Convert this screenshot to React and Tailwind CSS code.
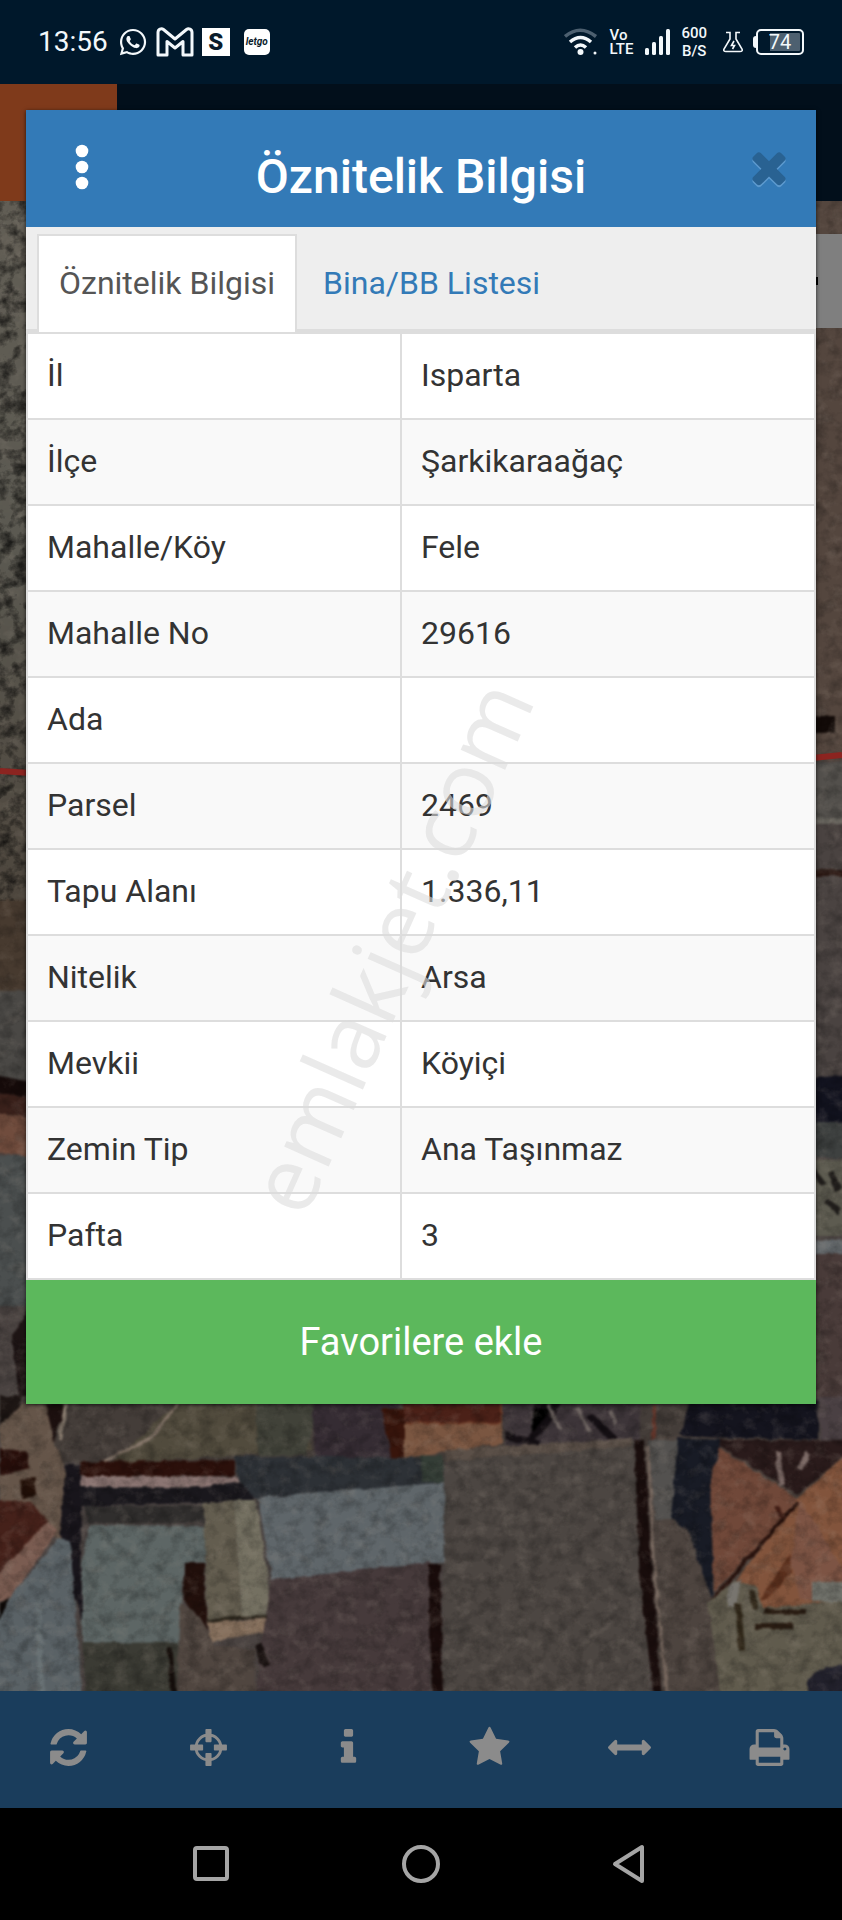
import React from "react";
import { FaWhatsapp } from "react-icons/fa";

const rows = [
  { label: "İl", value: "Isparta" },
  { label: "İlçe", value: "Şarkikaraağaç" },
  { label: "Mahalle/Köy", value: "Fele" },
  { label: "Mahalle No", value: "29616" },
  { label: "Ada", value: "" },
  { label: "Parsel", value: "2469" },
  { label: "Tapu Alanı", value: "1.336,11" },
  { label: "Nitelik", value: "Arsa" },
  { label: "Mevkii", value: "Köyiçi" },
  { label: "Zemin Tip", value: "Ana Taşınmaz" },
  { label: "Pafta", value: "3" },
];

const tools = [
  {
    name: "Yenile",
    path: "M1511 928q0 5-1 7-64 268-268 434.5t-478 166.5q-146 0-282.5-55t-243.5-157l-129 129q-19 19-45 19t-45-19-19-45v-448q0-26 19-45t45-19h448q26 0 45 19t19 45-19 45l-137 137q71 66 161 102t187 36q134 0 250-65t186-179q11-17 53-117 8-23 30-23h192q13 0 22.5 9.5t9.5 22.5zm25-800v448q0 26-19 45t-45 19h-448q-26 0-45-19t-19-45 19-45l138-138q-148-137-349-137-134 0-250 65t-186 179q-11 17-53 117-8 23-30 23h-199q-13 0-22.5-9.5t-9.5-22.5v-7q65-268 270-434.5t480-166.5q146 0 284 55.5t245 156.5l130-129q19-19 45-19t45 19 19 45z",
    viewBox: "-128 -128 1792 1792",
  },
  {
    name: "Konum",
    path: "M896 316a580 580 0 1 0 0 1160a580 580 0 1 0 0-1160zm0 120a460 460 0 1 1 0 920a460 460 0 1 1 0-920zM768 160v480q0 32 32 32h192q32 0 32-32V160q0-32-32-32H800q-32 0-32 32zM768 1152v480q0 32 32 32h192q32 0 32-32v-480q0-32-32-32H800q-32 0-32 32zM128 800v192q0 32 32 32h480q32 0 32-32V800q0-32-32-32H160q-32 0-32 32zM1120 800v192q0 32 32 32h480q32 0 32-32V800q0-32-32-32h-480q-32 0-32 32z",
    viewBox: "0 0 1792 1792",
  },
  {
    name: "Bilgi",
    path: "M1216 1344v128q0 26-19 45t-45 19h-512q-26 0-45-19t-19-45v-128q0-26 19-45t45-19h64v-384h-64q-26 0-45-19t-19-45v-128q0-26 19-45t45-19h384q26 0 45 19t19 45v576h64q26 0 45 19t19 45zm-128-1152v192q0 26-19 45t-45 19h-256q-26 0-45-19t-19-45v-192q0-26 19-45t45-19h256q26 0 45 19t19 45z",
    viewBox: "0 0 1792 1792",
  },
  {
    name: "Favoriler",
    path: "M1728 647q0 22-26 48l-363 354 86 500q1 7 1 20 0 21-10.5 35.5t-30.5 14.5q-19 0-40-12l-449-236-449 236q-22 12-40 12-21 0-31.5-14.5t-10.5-35.5q0-6 2-20l86-500-364-354q-25-27-25-48 0-37 56-46l502-73 225-455q19-41 49-41t49 41l225 455 502 73q56 9 56 46z",
    viewBox: "0 0 1792 1792",
  },
  {
    name: "Ölçüm",
    path: "M1792 896q0 26-19 45l-256 256q-19 19-45 19t-45-19-19-45v-128h-1024v128q0 26-19 45t-45 19-45-19l-256-256q-19-19-19-45t19-45l256-256q19-19 45-19t45 19 19 45v128h1024v-128q0-26 19-45t45-19 45 19l256 256q19 19 19 45z",
    viewBox: "0 0 1792 1792",
  },
  {
    name: "Yazdır",
    path: "M448 1536h896v-256h-896v256zm0-640h896v-384h-160q-40 0-68-28t-28-68v-160h-640v640zm1152 64q0-26-19-45t-45-19-45 19-19 45 19 45 45 19 45-19 19-45zm128 0v416q0 13-9.5 22.5t-22.5 9.5h-224v160q0 40-28 68t-68 28h-960q-40 0-68-28t-28-68v-160h-224q-13 0-22.5-9.5t-9.5-22.5v-416q0-79 56.5-135.5t135.5-56.5h64v-544q0-40 28-68t68-28h672q40 0 88 20t76 48l152 152q28 28 48 76t20 88v256h64q79 0 135.5 56.5t56.5 135.5z",
    viewBox: "0 0 1792 1792",
  },
];

function StatusBar() {
  return (
    <div className="flex h-[84px] items-center justify-between bg-[#00182b] pr-[38px] pl-[38px] text-[#f3f8fb]">
      <div className="flex items-center">
        <span className="text-[28px] leading-8">13:56</span>
        <FaWhatsapp className="ml-[10px] size-[30px]" />
        <svg className="ml-2 h-[30px] w-[38px]" viewBox="0 0 38 30" fill="none">
          <path
            d="M2 5.5C2 2 5.500 1 7.500 2.500L19 12 30.500 2.500C32.500 1 36 2 36 5.500V28H27V14.500L19 21 11 14.500V28H2z"
            stroke="currentColor"
            strokeWidth="3"
            strokeLinejoin="round"
          />
        </svg>
        <span className="ml-2 flex size-[28px] items-center justify-center bg-white text-[24px] leading-7 font-black text-[#0b1c2b]">
          S
        </span>
        <span className="ml-[14px] flex size-[26px] items-center justify-center rounded-[5px] bg-white text-[10px] leading-3 font-bold text-[#0b1c2b] italic">
          letgo
        </span>
      </div>
      <div className="flex items-center">
        <svg className="h-[28px] w-[34px]" viewBox="0 0 34 28" fill="none" strokeWidth="3.500">
          <path d="M1 8.500Q16 -4 32 8.500" stroke="#4d6070" />
          <path d="M6 14Q16.500 5 27 14" stroke="currentColor" />
          <path d="M11 19.500Q16.500 14.500 22 19.500" stroke="currentColor" />
          <circle cx="16.500" cy="24" r="3" fill="currentColor" />
          <circle cx="31" cy="25" r="1.500" fill="currentColor" />
        </svg>
        <span className="ml-3 flex flex-col text-[15px] leading-[14px] font-medium">
          <span>Vo</span>
          <span>LTE</span>
        </span>
        <svg className="ml-3 h-[26px] w-[26px]" viewBox="0 0 26 26" fill="currentColor">
          <rect x="0" y="19" width="4" height="7" rx="1.500" />
          <rect x="7" y="13" width="4" height="13" rx="1.500" />
          <rect x="14" y="7" width="4" height="19" rx="1.500" />
          <rect x="21" y="0" width="4" height="26" rx="1.500" />
        </svg>
        <span className="ml-[10px] flex flex-col items-center text-[15px] leading-[18px] font-medium">
          <span>600</span>
          <span>B/S</span>
        </span>
        <svg className="ml-4 h-[22px] w-[20px]" viewBox="0 0 20 22" fill="none" stroke="currentColor" strokeWidth="1.600">
          <path d="M3 1.500H7V8L1 18Q0 20.500 3 20.500H17Q20 20.500 19 18L13 8V1.500H17" />
          <path d="M11 10L8.500 14.500H11.500L9.500 18" />
        </svg>
        <span className="ml-[10px] flex items-center">
          <span className="h-3 w-[3px] rounded-l-sm bg-[#f3f8fb]" />
          <span className="flex h-[26px] w-12 items-center justify-center rounded-[5px] border-2 border-[#f3f8fb] bg-[linear-gradient(90deg,transparent_12px,#4d6070_12px)] bg-clip-content p-[2px] text-[20px] leading-5">
            74
          </span>
        </span>
      </div>
    </div>
  );
}

// Satellite layer, already darkened by the modal backdrop
function SatelliteMap() {
  return (
    <svg
      className="absolute inset-0 h-full w-full"
      viewBox="0 201 842 1490"
      preserveAspectRatio="xMidYMid slice"
      aria-hidden="true"
    >
      <defs>
        <filter id="soft" x="-2%" y="-2%" width="104%" height="104%" colorInterpolationFilters="sRGB">
          <feTurbulence type="fractalNoise" baseFrequency=".08" numOctaves="3" seed="4" result="n" />
          <feDisplacementMap in="SourceGraphic" in2="n" scale="5" xChannelSelector="R" yChannelSelector="G" />
          <feGaussianBlur stdDeviation="1.300" />
        </filter>
        <filter id="grain" x="0" y="0" width="100%" height="100%" colorInterpolationFilters="sRGB">
          <feTurbulence type="fractalNoise" baseFrequency=".07 .08" numOctaves="4" seed="9" />
          <feColorMatrix values="0 0 0 0 0  0 0 0 0 0  0 0 0 0 0  2.400 0 0 0 -1" />
        </filter>
        <filter id="light" x="0" y="0" width="100%" height="100%" colorInterpolationFilters="sRGB">
          <feTurbulence type="fractalNoise" baseFrequency=".07 .08" numOctaves="4" seed="21" />
          <feColorMatrix values="0 0 0 0 .7  0 0 0 0 .65  0 0 0 0 .6  0 2.400 0 0 -1.200" />
        </filter>
        <linearGradient id="rocks" x1="0" y1="0" x2="0" y2="1">
          <stop offset="0" stopColor="#625e55" />
          <stop offset=".5" stopColor="#5b5951" />
          <stop offset="1" stopColor="#4d463d" />
        </linearGradient>
      </defs>
      <rect x="0" y="201" width="842" height="1490" fill="#4a4341" />
      <g filter="url(#soft)">
        {/* left edge */}
        <rect x="-10" y="190" width="60" height="710" fill="url(#rocks)" />
        <rect x="-10" y="900" width="60" height="90" fill="#473a2f" />
        <rect x="-10" y="990" width="60" height="90" fill="#4a4845" />
        <path d="M-10 1074L40 1084V1100L-10 1092z" fill="#160b0a" />
        <path d="M-10 1092L40 1100V1120L-10 1112z" fill="#3a211b" />
        <path d="M-10 1112L40 1120V1158L-10 1152z" fill="#704c3d" />
        <rect x="-10" y="1156" width="60" height="150" fill="#4b4f4f" />
        <path d="M40 1290L12 1335 20 1410H40z" fill="#1d1414" />

        {/* right edge */}
        <rect x="800" y="190" width="60" height="571" fill="#54463e" />
        <rect x="800" y="716" width="35" height="17" fill="#120a08" />
        <rect x="800" y="762" width="60" height="60" fill="#53504c" />
        <rect x="800" y="818" width="60" height="6" fill="#69665f" />
        <rect x="800" y="870" width="60" height="6" fill="#2c1914" />
        <path d="M800 1080L850 1074V1122H800z" fill="#12131f" />
        <rect x="800" y="1122" width="60" height="36" fill="#3e4140" />
        <rect x="800" y="1160" width="60" height="76" fill="#5d5b50" />
        <path d="M812 1170L824 1185M830 1172L838 1190M826 1202L840 1212" stroke="#201d1b" strokeWidth="6" />
        <rect x="800" y="1240" width="60" height="14" fill="#64696c" />
        <rect x="800" y="1254" width="60" height="160" fill="#493b39" />

        {/* gardens under the dialog */}
        <rect x="0" y="1396" width="842" height="66" fill="#443d39" />
        <path d="M0 1396H22L8 1440 0 1436z" fill="#1d1614" />
        <path d="M22 1404H48L54 1440 66 1470 62 1540 40 1530 0 1500V1425z" fill="#655549" />
        <path d="M46 1404H66L54 1442z" fill="#1c100f" />
        <path d="M158 1420L176 1404H300L312 1450 110 1464 130 1446z" fill="#514b3d" />
        <path d="M178 1404L150 1438 104 1462" fill="none" stroke="#827367" strokeWidth="3" />
        <path d="M66 1404L60 1440" stroke="#8a7d70" strokeWidth="4" />
        <path d="M256 1400H320L306 1455H258z" fill="#414239" />
        <path d="M312 1400H400V1462H315z" fill="#352c33" />
        <path d="M382 1408H404V1462H392z" fill="#38150c" />
        <path d="M404 1400H502V1442H404z" fill="#6b3b28" />
        <path d="M404 1400H500V1422H404z" fill="#4b2118" />
        <path d="M404 1424H502V1444L404 1458z" fill="#7a5641" />
        <path d="M0 1448L26 1452 30 1468 0 1475z" fill="#290f0b" />
        <path d="M20 1480L36 1478 34 1495 22 1500z" fill="#231008" />
        <path d="M502 1400H640V1440L505 1446z" fill="#3d3539" />
        <path d="M534 1406L556 1406 545 1425 530 1438M590 1415L615 1440M505 1436L540 1444" stroke="#140f13" strokeWidth="7" />
        <path d="M548 1404L560 1430M576 1408L590 1432M610 1410L616 1425" stroke="#6b625f" strokeWidth="4" />
        <path d="M690 1400H818V1445L680 1436z" fill="#14141e" />
        <path d="M818 1396H850V1440H820z" fill="#4a4043" />

        {/* long walls and roofs */}
        <path d="M80 1462L235 1460V1476H80z" fill="#2b100b" />
        <path d="M78 1476L240 1477 246 1487H78z" fill="#8b7572" />
        <path d="M66 1464L80 1464 82 1620 72 1590 60 1530z" fill="#18151b" />
        <path d="M80 1487L190 1488 250 1480 254 1500 204 1503 80 1506z" fill="#1a181d" />
        <path d="M84 1506H204V1523H88z" fill="#302e2d" />
        <path d="M235 1456L440 1458V1484L255 1498 238 1480z" fill="#2d3136" />
        <path d="M421 1454L442 1456 444 1482H421z" fill="#343d36" />
        <path d="M258 1498L448 1482 448 1562 272 1580z" fill="#5f666a" />
        <path d="M90 1525L207 1526 205 1562 184 1564 180 1645 82 1642 82 1565z" fill="#5d6665" />
        <path d="M82 1642L180 1643V1700H86z" fill="#3b3b34" />
        <path d="M184 1563H204L207 1635 196 1615 184 1600z" fill="#22100c" />
        <path d="M204 1503L234 1500 242 1618 207 1624z" fill="#635d4f" />
        <path d="M234 1500L256 1500 274 1618 242 1618z" fill="#747061" />
        <path d="M207 1622L274 1618 274 1630 210 1642z" fill="#86705d" />
        <path d="M207 1622L242 1617 274 1618" fill="none" stroke="#2e281e" strokeWidth="3" />
        <path d="M180 1605L194 1610 215 1645 255 1650V1700H176z" fill="#504640" />
        <path d="M170 1648L174 1700" stroke="#160f0c" strokeWidth="5" />
        <path d="M272 1580L430 1562V1700H255L262 1640z" fill="#463a3b" />
        <path d="M258 1645L266 1666" stroke="#17100f" strokeWidth="8" />
        <path d="M-8 1500L30 1502 48 1522 -8 1582z" fill="#45211a" />
        <path d="M48 1522L58 1530 10 1598 -8 1606V1578z" fill="#7a5c51" />
        <path d="M10 1598L58 1538 70 1540 82 1700H-8V1620z" fill="#5a6266" />
        <path d="M38 1600L42 1700" stroke="#687174" strokeWidth="6" />
        <path d="M0 1606L8 1596 5 1612 0 1620z" fill="#0e0a08" />

        {/* empty plots */}
        <path d="M445 1455L640 1440 650 1700H442z" fill="#4c4642" />
        <path d="M445 1450L632 1438V1446L446 1461z" fill="#5b5048" />
        <path d="M428 1565H440L443 1700H432z" fill="#190c0b" />
        <path d="M643 1436L660 1700H850V1440z" fill="#4d443f" />
        <path d="M648 1440L678 1440 672 1520 655 1520z" fill="#53514f" />
        <path d="M634 1440H644L652 1570 662 1700H654L640 1580z" fill="#1a0e0d" />
        <path d="M648 1446L656 1590 668 1700" fill="none" stroke="#75665d" strokeWidth="3" />
        <path d="M654 1404V1440" stroke="#63372c" strokeWidth="4" />

        {/* tiled roof on the right */}
        <path d="M678 1438L722 1440 712 1602 688 1530 671 1518z" fill="#181b25" />
        <path d="M720 1446L798 1495 850 1450V1440H720z" fill="#2a1b1b" />
        <path d="M778 1452L782 1485M808 1452L800 1470" stroke="#7a6864" strokeWidth="6" />
        <path d="M720 1448L800 1500 714 1592 710 1480z" fill="#704839" />
        <path d="M798 1498L850 1450V1600L800 1608H762L720 1602z" fill="#82543c" />
        <path d="M800 1500L850 1580V1600H800L790 1560z" fill="#7d5444" />
        <path d="M790 1554L760 1600 768 1600 791 1572z" fill="#5b301d" />
        <path d="M798 1502L712 1600" stroke="#28120d" strokeWidth="4" />
        <path d="M776 1506L784 1518" stroke="#3f1c14" strokeWidth="5" />
        <path d="M708 1602L735 1580 756 1586 762 1608 850 1600V1700H722z" fill="#605b4d" />
        <path d="M728 1586L742 1578 736 1606 728 1608z" fill="#78756f" />
        <path d="M812 1582H850V1602H812z" fill="#70716a" />
        <path d="M764 1612H806M756 1626H792" stroke="#2a1d13" strokeWidth="6" />
        <path d="M738 1604L742 1650M752 1590L754 1608" stroke="#302719" strokeWidth="6" />
        <path d="M808 1678L826 1668 850 1664V1700H808z" fill="#23222d" />
      </g>
      <rect x="0" y="201" width="842" height="1490" filter="url(#grain)" opacity=".22" />
      <rect x="0" y="201" width="842" height="1490" filter="url(#light)" opacity=".16" />
      {/* rougher ground beside the upper half of the dialog */}
      <rect x="0" y="201" width="30" height="700" filter="url(#grain)" opacity=".6" />
      <path d="M0 771L30 773M812 758L842 755" stroke="#8c2420" strokeWidth="6" />
    </svg>
  );
}

function ParcelDialog() {
  return (
    <div
      role="dialog"
      aria-label="Öznitelik Bilgisi"
      className="absolute inset-x-[26px] top-[110px] bg-white shadow-[0_1px_4px_rgba(0,0,0,0.7)]"
    >
      <div className="grid h-[117px] grid-cols-[112px_1fr_112px] items-center bg-[#337ab7]">
        <button className="flex justify-center pb-1" aria-label="Menü">
          <svg className="h-[46px] w-[14px]" viewBox="0 0 14 46" fill="#fff">
            <circle cx="7" cy="7" r="6.300" />
            <circle cx="7" cy="23" r="6.300" />
            <circle cx="7" cy="39" r="6.300" />
          </svg>
        </button>
        <h1 className="pt-4 text-center text-[48px] leading-[56px] font-medium text-white">
          Öznitelik Bilgisi
        </h1>
        <button className="flex justify-center pb-1 pl-[18px]" aria-label="Kapat">
          <svg className="size-[50px]" viewBox="0 0 1792 1792" fill="#296292">
            <path
              className="drop-shadow-[0_70px_0_#5e9bcf]"
              d="M1490 1322q0 40-28 68l-136 136q-28 28-68 28t-68-28l-294-294-294 294q-28 28-68 28t-68-28l-136-136q-28-28-28-68t28-68l294-294-294-294q-28-28-28-68t28-68l136-136q28-28 68-28t68 28l294 294 294-294q28-28 68-28t68 28l136 136q28 28 28 68t-28 68l-294 294 294 294q28 28 28 68z"
            />
          </svg>
        </button>
      </div>

      <div
        role="tablist"
        className="flex h-[105px] border-b-[3px] border-[#ddd] bg-[#eee] pt-[7px] pl-[11px] text-[32px] leading-10"
      >
        <button
          role="tab"
          aria-selected="true"
          className="-mb-[3px] mr-1 border-2 border-b-0 border-[#ddd] bg-white px-5 pb-[2px] text-[#555]"
        >
          Öznitelik Bilgisi
        </button>
        <button
          role="tab"
          aria-selected="false"
          className="-mb-[3px] border-2 border-b-0 border-transparent px-5 pb-[2px] text-[#337ab7]"
        >
          Bina/BB Listesi
        </button>
      </div>

      <table className="w-full table-fixed border-collapse text-[32px] leading-10 text-[#333]">
        <tbody>
          {rows.map((row) => (
            <tr key={row.label} className="h-[86px] even:bg-[#f9f9f9]">
              <th
                scope="row"
                className="w-[374px] border-2 border-[#ddd] px-[19px] pb-[2px] text-left font-normal"
              >
                {row.label}
              </th>
              <td className="border-2 border-[#ddd] px-[19px] pb-[2px]">{row.value}</td>
            </tr>
          ))}
        </tbody>
      </table>

      <button className="block h-[124px] w-full bg-[#5cb85c] text-[38px] leading-[48px] text-white">
        Favorilere ekle
      </button>

      <span className="pointer-events-none absolute top-[836px] left-[363px] -translate-x-1/2 -translate-y-1/2 -rotate-66 font-['Open_Sans',sans-serif] text-[91px] leading-none text-[#dcdcdc]/60">
        emlakjet.com
      </span>
    </div>
  );
}

export default function App() {
  return (
    <div className="relative flex min-h-screen flex-col overflow-hidden bg-black font-['Roboto',sans-serif]">
      <StatusBar />
      <header className="flex h-[117px] bg-[#020f1b]">
        <div className="w-[117px] bg-[#7f3a1b]" />
      </header>

      <main className="relative flex flex-1 justify-end pt-[33px]">
        <SatelliteMap />
        <div className="relative flex h-[94px] w-[60px] items-center bg-[#7f7f7f] pl-7">
          <span className="size-2 bg-black" />
        </div>
      </main>

      <nav className="grid h-[117px] grid-cols-6 bg-[#1a3d5c] text-[#8b8b8b]">
        {tools.map((tool) => (
          <button
            key={tool.name}
            aria-label={tool.name}
            className="flex items-center justify-center pr-1 pb-1"
          >
            <svg className="size-[43px]" viewBox={tool.viewBox} fill="currentColor">
              <path d={tool.path} />
            </svg>
          </button>
        ))}
      </nav>

      <div className="flex h-[112px] items-center justify-center gap-[170px] bg-black text-[#a5a5a5]">
        <button aria-label="Son uygulamalar">
          <svg className="size-10" viewBox="0 0 40 40" fill="none" stroke="currentColor" strokeWidth="4">
            <rect x="4" y="4" width="32" height="31" rx="2" />
          </svg>
        </button>
        <button aria-label="Ana ekran">
          <svg className="size-10" viewBox="0 0 40 40" fill="none" stroke="currentColor" strokeWidth="4">
            <circle cx="20" cy="20" r="17" />
          </svg>
        </button>
        <button aria-label="Geri">
          <svg
            className="size-10"
            viewBox="0 0 40 40"
            fill="none"
            stroke="currentColor"
            strokeWidth="4"
            strokeLinejoin="round"
          >
            <path d="M31 3V37L4 20z" />
          </svg>
        </button>
      </div>

      <ParcelDialog />
    </div>
  );
}
